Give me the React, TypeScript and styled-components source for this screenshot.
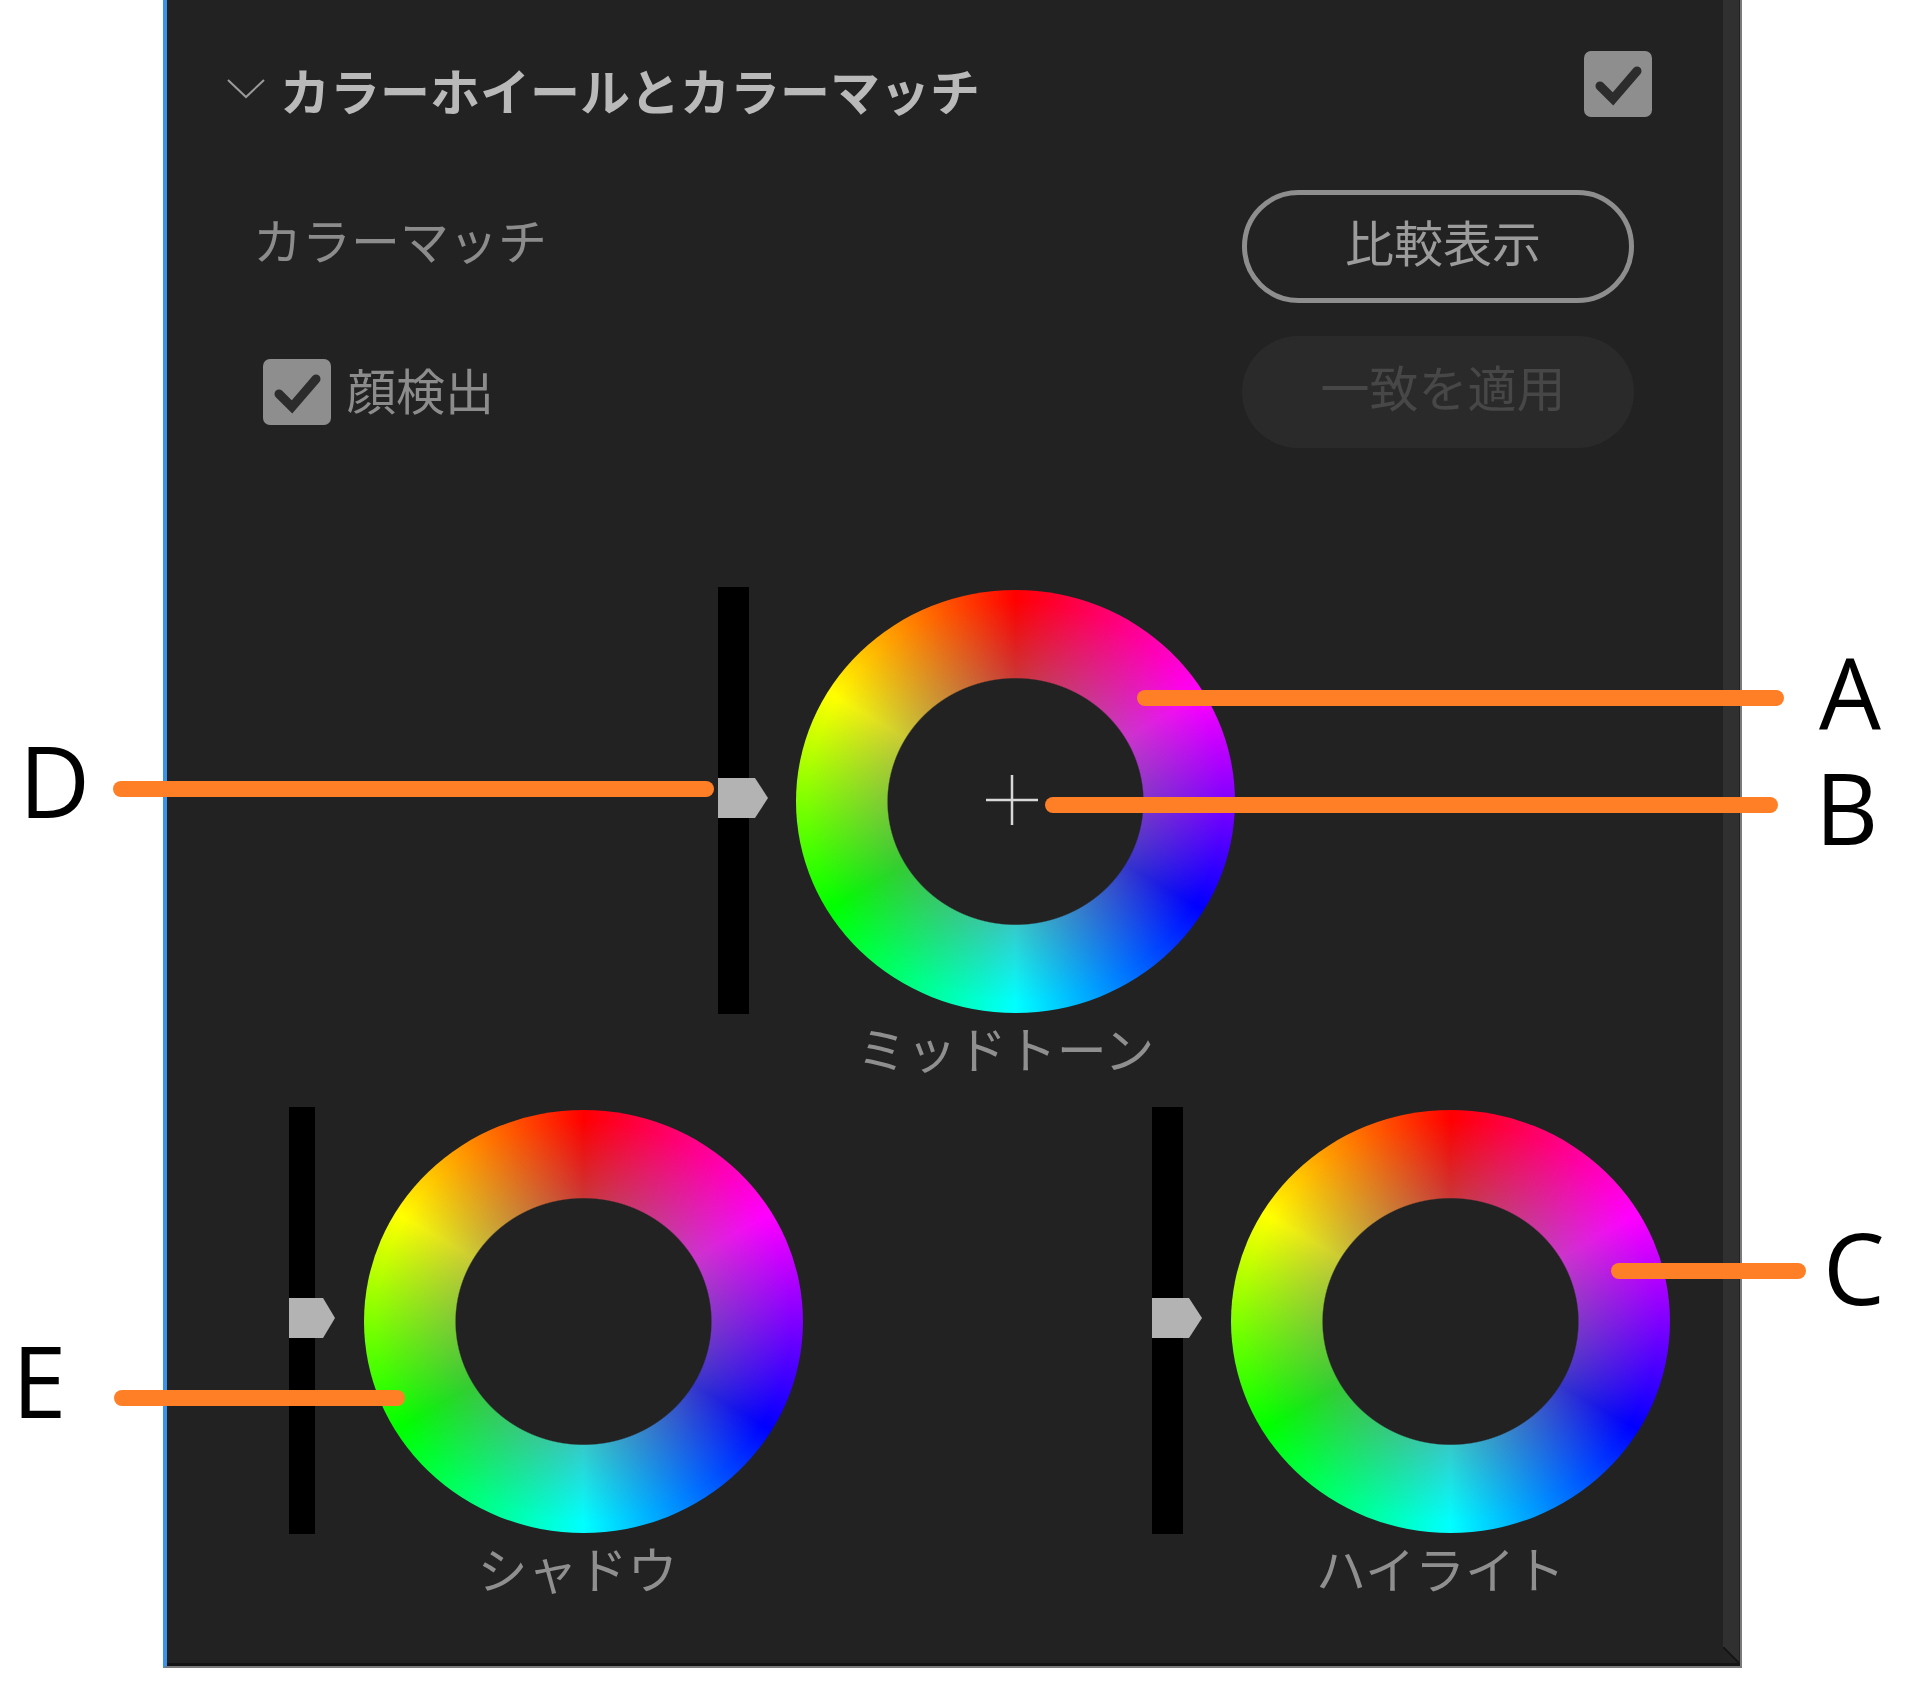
import React from "react";
import styled, { createGlobalStyle } from "styled-components";

const Global = createGlobalStyle`
  html, body { margin: 0; padding: 0; background: #fff; }
  * { box-sizing: border-box; }
  body { font-family: "Noto Sans CJK JP", "Noto Sans", sans-serif; }
`;

const Page = styled.div`
  position: relative;
  width: 1920px;
  height: 1681px;
  background: #fff;
  overflow: hidden;
  padding-left: 163px;
`;

const Panel = styled.section`
  position: relative;
  width: 1579px;
  height: 1668px;
  padding-top: 50px;
  background: #222222;
  border-left: 4px solid #3a93e6;
  border-right: 2px solid #7a7a7a;
  border-bottom: 2px solid #7a7a7a;
  box-shadow: inset 0 -3px 0 #141414;
`;

const ScrollStrip = styled.div`
  position: absolute;
  right: 1px;
  top: 0;
  bottom: 3px;
  width: 16px;
  background: #303030;
`;

const Grip = styled.div`
  position: absolute;
  right: 0;
  bottom: 0;
  width: 16px;
  height: 16px;
  background: linear-gradient(45deg, #232323 0 44%, #161616 44% 56%, transparent 56%);
`;

const Header = styled.header`
  display: flex;
  align-items: center;
  justify-content: space-between;
  height: 67px;
  padding: 0 88px 0 60px;
`;

const HeaderLeft = styled.div`
  display: flex;
  align-items: center;
  gap: 15px;
  transform: translateY(5px);
`;

const Title = styled.h2`
  margin: 0;
  font-size: 50px;
  line-height: 60px;
  font-weight: 700;
  color: #b9b9b9;
  white-space: nowrap;
`;

const Row = styled.div<{ $top: number; $left: number }>`
  display: flex;
  align-items: center;
  justify-content: space-between;
  margin-top: ${(p) => p.$top}px;
  padding: 0 106px 0 ${(p) => p.$left}px;
`;

const RowLabel = styled.div`
  font-size: 49px;
  line-height: 60px;
  font-weight: 400;
  color: #8c8c8c;
  white-space: nowrap;
  transform: translateY(-8px);
`;

const CheckLabel = styled.label`
  display: flex;
  align-items: center;
  gap: 16px;
  font-size: 49px;
  line-height: 60px;
  color: #8c8c8c;
  transform: translateY(-3px);
`;

const CheckBox = styled.span<{ $nudge?: number }>`
  display: flex;
  align-items: center;
  justify-content: center;
  flex: none;
  width: 68px;
  height: 66px;
  border-radius: 7px;
  background: #8e8e8e;
  transform: translateY(${(p) => p.$nudge ?? 0}px);
`;

const Button = styled.button<{ $disabled?: boolean }>`
  width: 392px;
  height: ${(p) => (p.$disabled ? 112 : 113)}px;
  padding: 0 0 12px 10px;
  border-radius: 57px;
  border: ${(p) => (p.$disabled ? "none" : "5px solid #8e8e8e")};
  background: ${(p) => (p.$disabled ? "#2a2a2a" : "transparent")};
  color: ${(p) => (p.$disabled ? "#474747" : "#9c9c9c")};
  font: 400 49px/60px "Noto Sans CJK JP", sans-serif;
`;

const WheelRow = styled.div<{ $top: number; $left: number; $gap?: number }>`
  display: flex;
  gap: ${(p) => p.$gap ?? 0}px;
  margin-top: ${(p) => p.$top}px;
  padding-left: ${(p) => p.$left}px;
`;

const Unit = styled.div`
  display: grid;
  grid-template-columns: auto 439px;
`;

const Slider = styled.div<{ $width: number; $gap: number }>`
  position: relative;
  width: ${(p) => p.$width}px;
  height: 427px;
  margin-right: ${(p) => p.$gap}px;
  background: #000;
`;

const Thumb = styled.div<{ $width: number; $top: number }>`
  position: absolute;
  left: 0;
  top: ${(p) => p.$top}px;
  width: ${(p) => p.$width}px;
  height: 40px;
  background: #b3b3b3;
  clip-path: polygon(0 0, 74% 0, 100% 50%, 74% 100%, 0 100%);
`;

const Wheel = styled.div`
  display: flex;
  align-items: center;
  justify-content: center;
  width: 439px;
  height: 423px;
  margin-top: 3px;
  border-radius: 50%;
  background:
    radial-gradient(
      ellipse closest-side,
      #222222 0 58%,
      rgba(128, 128, 128, 0.42) 58.6%,
      rgba(128, 128, 128, 0) 95%
    ),
    conic-gradient(
      #ff0000 0deg,
      #ff00ff 60deg,
      #0000ff 120deg,
      #00ffff 180deg,
      #00ff00 240deg,
      #ffff00 300deg,
      #ff0000 360deg
    );
`;

const Cross = styled.svg`
  width: 52px;
  height: 50px;
  transform: translate(-4px, -2px);
`;

const WheelLabel = styled.div<{ $shift: number }>`
  grid-column: 2;
  margin-top: 3px;
  padding-right: ${(p) => p.$shift}px;
  margin-left: -60px;
  margin-right: -60px;
  text-align: center;
  font-size: 50px;
  line-height: 60px;
  font-weight: 400;
  color: #8f8f8f;
  white-space: nowrap;
`;

const Leader = styled.div<{ $x: number; $y: number; $w: number }>`
  position: absolute;
  left: ${(p) => p.$x}px;
  top: ${(p) => p.$y - 8}px;
  width: ${(p) => p.$w}px;
  height: 16px;
  border-radius: 8px;
  background: #ff7f27;
`;

const Letter = styled.div<{ $x: number; $y: number }>`
  position: absolute;
  left: ${(p) => p.$x}px;
  top: ${(p) => p.$y}px;
  font-family: "Open Sans", "Noto Sans", sans-serif;
  font-size: 98px;
  line-height: 80px;
  color: #000;
`;

const Check = () => (
  <svg width="68" height="66" viewBox="0 0 68 66">
    <polyline
      points="16,35 29,48 53,20"
      fill="none"
      stroke="#2c2c2c"
      strokeWidth="9"
      strokeLinecap="round"
    />
  </svg>
);

type WheelUnitProps = {
  label: string;
  sliderWidth: number;
  gap: number;
  thumbWidth: number;
  shift: number;
  cross?: boolean;
};

const WheelUnit = ({ label, sliderWidth, gap, thumbWidth, shift, cross }: WheelUnitProps) => (
  <Unit>
    <Slider $width={sliderWidth} $gap={gap}>
      <Thumb $width={thumbWidth} $top={191} />
    </Slider>
    <Wheel>
      {cross && (
        <Cross viewBox="0 0 52 50">
          <path d="M0 25H52M26 0V50" stroke="#d8d8d8" strokeWidth="2.5" fill="none" />
        </Cross>
      )}
    </Wheel>
    <WheelLabel $shift={shift}>{label}</WheelLabel>
  </Unit>
);

const leaders = [
  { x: 1137, y: 698, w: 647 },
  { x: 1045, y: 805, w: 733 },
  { x: 1611, y: 1271, w: 195 },
  { x: 113, y: 789, w: 601 },
  { x: 114, y: 1398, w: 291 },
];

const letters = [
  { t: "A", x: 1819, y: 651 },
  { t: "B", x: 1815, y: 767 },
  { t: "C", x: 1823, y: 1227 },
  { t: "D", x: 19, y: 740 },
  { t: "E", x: 12, y: 1340 },
];

export default function App() {
  return (
    <Page>
      <Global />
      <Panel>
        <Header>
          <HeaderLeft>
            <svg width="38" height="20" viewBox="0 0 38 20">
              <polyline points="1,1 19,18 37,1" fill="none" stroke="#9a9a9a" strokeWidth="2" />
            </svg>
            <Title>カラーホイールとカラーマッチ</Title>
          </HeaderLeft>
          <CheckBox>
            <Check />
          </CheckBox>
        </Header>
        <Row $top={73} $left={86}>
          <RowLabel>カラーマッチ</RowLabel>
          <Button>比較表示</Button>
        </Row>
        <Row $top={33} $left={96}>
          <CheckLabel>
            <CheckBox $nudge={3}>
              <Check />
            </CheckBox>
            顔検出
          </CheckLabel>
          <Button $disabled>一致を適用</Button>
        </Row>
        <WheelRow $top={139} $left={551}>
          <WheelUnit label="ミッドトーン" sliderWidth={31} gap={47} thumbWidth={50} shift={20} cross />
        </WheelRow>
        <WheelRow $top={30} $left={122} $gap={349}>
          <WheelUnit label="シャドウ" sliderWidth={26} gap={49} thumbWidth={46} shift={12} />
          <WheelUnit label="ハイライト" sliderWidth={31} gap={48} thumbWidth={50} shift={20} />
        </WheelRow>
        <ScrollStrip>
          <Grip />
        </ScrollStrip>
      </Panel>
      {leaders.map((l) => (
        <Leader key={l.x} $x={l.x} $y={l.y} $w={l.w} />
      ))}
      {letters.map((l) => (
        <Letter key={l.t} $x={l.x} $y={l.y}>
          {l.t}
        </Letter>
      ))}
    </Page>
  );
}
